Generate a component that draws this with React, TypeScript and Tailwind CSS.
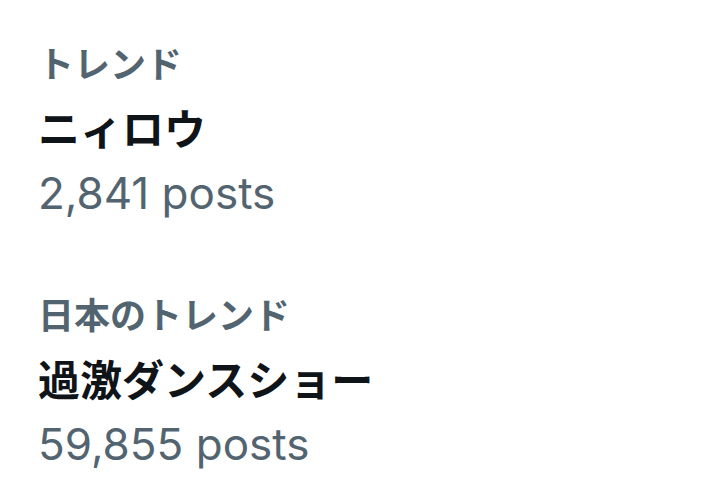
const trends = [
  { label: "トレンド", title: "ニィロウ", count: "2,841 posts" },
  { label: "日本のトレンド", title: "過激ダンスショー", count: "59,855 posts" },
];

export default function App() {
  return (
    <div
      className="w-[713px] h-[489px] bg-white pl-[38px] pt-[33px] flex flex-col gap-[59px] overflow-hidden"
      style={{ fontFamily: "Inter, 'Noto Sans CJK JP', sans-serif" }}
    >
      {trends.map((t) => (
        <div key={t.title} className="flex flex-col">
          <div className="h-[64px] flex items-center text-[36px] font-semibold text-[#536471]">
            {t.label}
          </div>
          <div className="h-[64px] flex items-center text-[42px] font-bold text-[#0f1419]">
            {t.title}
          </div>
          <div className="h-[64px] flex items-center text-[44px] text-[#536471]">
            {t.count}
          </div>
        </div>
      ))}
    </div>
  );
}
